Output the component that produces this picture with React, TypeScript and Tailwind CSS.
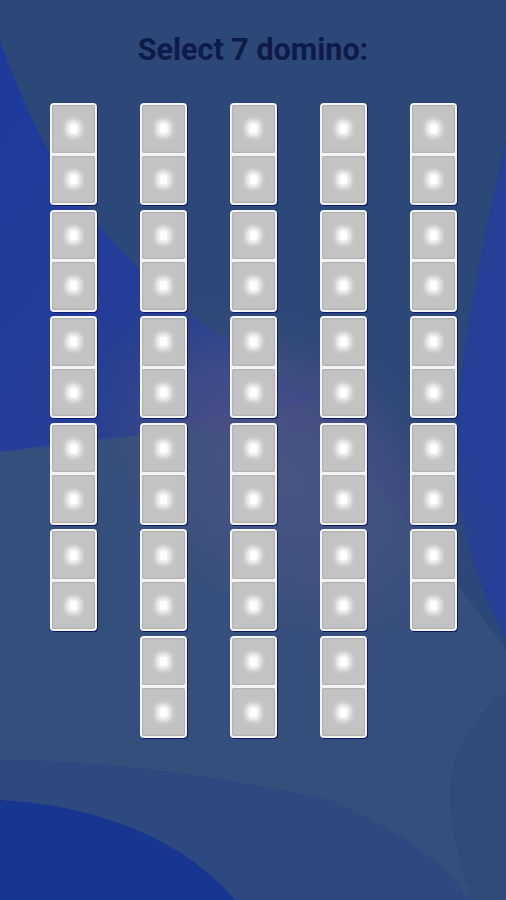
import React from 'react'

const columns = [5, 6, 6, 6, 5]

function Half() {
  return (
    <div className="flex-1 flex items-center justify-center rounded-[2px] bg-[#c3c3c3] shadow-[inset_0_0_2px_rgba(0,0,0,0.3)]">
      <div className="w-[7px] h-[9px] bg-white rounded-[2px] shadow-[0_0_5px_4px_rgba(255,255,255,0.85)]" />
    </div>
  )
}

function Domino() {
  return (
    <div className="w-[47px] h-[102px] flex flex-col gap-[3px] p-[2px] rounded-[4px] bg-[#f4f4f4] shadow-[1px_1px_0_#0b1a6e]">
      <Half />
      <Half />
    </div>
  )
}

function Background() {
  return (
    <svg className="absolute inset-0 w-full h-full" viewBox="0 0 506 900" preserveAspectRatio="none">
      <defs>
        <radialGradient id="glow" cx="280" cy="480" r="240" gradientUnits="userSpaceOnUse" gradientTransform="rotate(40 280 480) scale(1 0.7) translate(0 200)">
          <stop offset="0" stopColor="#545387" />
          <stop offset="0.55" stopColor="#484f83" stopOpacity="0.7" />
          <stop offset="1" stopColor="#2d4774" stopOpacity="0" />
        </radialGradient>
        <linearGradient id="leftblue" x1="0" y1="0" x2="1" y2="1">
          <stop offset="0" stopColor="#1d3a9c" />
          <stop offset="1" stopColor="#2a4096" />
        </linearGradient>
      </defs>
      <rect width="506" height="900" fill="#2b4878" />
      {/* left blue swoosh */}
      <path d="M0 40 C25 110 60 190 130 260 C190 320 250 360 320 400 C250 410 180 425 110 440 C60 447 25 450 0 452 Z" fill="url(#leftblue)" />
      {/* right blue band */}
      <path d="M506 140 C480 250 455 380 455 460 C460 540 480 590 506 640 Z" fill="#263f97" />
      <rect width="506" height="900" fill="url(#glow)" />
      {/* lower grey wash */}
      <path d="M0 452 C110 435 230 425 320 432 C380 480 440 560 506 650 L506 900 L0 900 Z" fill="#3f5680" opacity="0.5" />
      {/* bottom middle */}
      <path d="M0 760 C120 760 240 780 330 800 C400 830 440 860 470 900 L0 900 Z" fill="#2a4682" opacity="0.6" />
      {/* bottom left blue */}
      <path d="M0 800 C90 805 180 835 235 900 L0 900 Z" fill="#17368f" />
      {/* bottom right */}
      <path d="M506 690 C470 720 445 760 450 810 C455 850 465 880 470 900 L506 900 Z" fill="#2d4a78" opacity="0.6" />
    </svg>
  )
}

export default function App() {
  return (
    <div className="relative w-full min-h-screen overflow-hidden font-['Roboto',sans-serif]">
      <Background />
      <div className="relative flex flex-col items-center pt-[32px]">
        <h1 className="text-[30.5px] leading-[36px] font-bold text-[#0e1b49]">Select 7 domino:</h1>
        <div className="mt-[35px] flex justify-center gap-[43px]">
          {columns.map((count, i) => (
            <div key={i} className="flex flex-col gap-[4.6px]">
              {Array.from({ length: count }).map((_, j) => (
                <Domino key={j} />
              ))}
            </div>
          ))}
        </div>
      </div>
    </div>
  )
}
